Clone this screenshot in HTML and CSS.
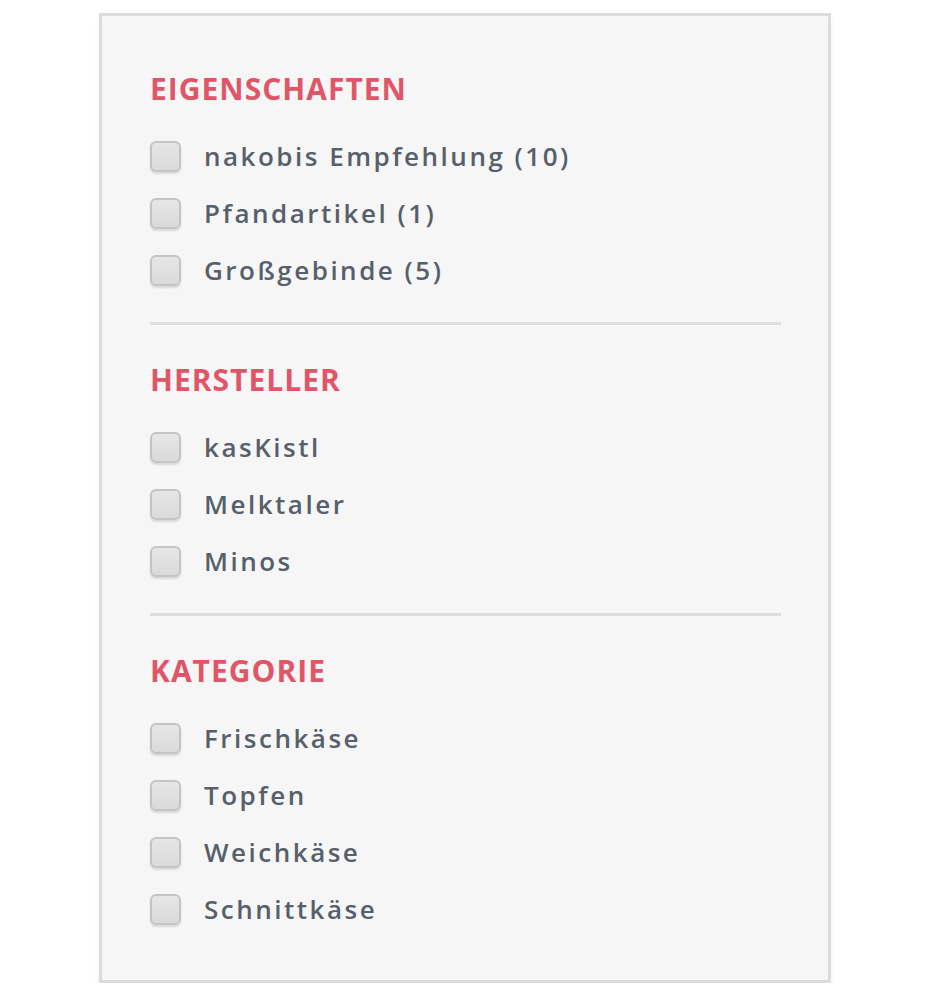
FILE: index.html
```html
<!DOCTYPE html>
<html lang="de">
<head>
<meta charset="utf-8">
<title>Filter</title>
<link rel="stylesheet" href="styles.css">
</head>
<body>
<div class="panel">
  <section class="group">
    <h3 class="group-title">EIGENSCHAFTEN</h3>
    <ul class="options">
      <li class="option"><span class="box"></span><span class="label">nakobis Empfehlung (10)</span></li>
      <li class="option"><span class="box"></span><span class="label">Pfandartikel (1)</span></li>
      <li class="option"><span class="box"></span><span class="label">Großgebinde (5)</span></li>
    </ul>
  </section>
  <section class="group">
    <h3 class="group-title">HERSTELLER</h3>
    <ul class="options">
      <li class="option"><span class="box"></span><span class="label">kasKistl</span></li>
      <li class="option"><span class="box"></span><span class="label">Melktaler</span></li>
      <li class="option"><span class="box"></span><span class="label">Minos</span></li>
    </ul>
  </section>
  <section class="group">
    <h3 class="group-title">KATEGORIE</h3>
    <ul class="options">
      <li class="option"><span class="box"></span><span class="label">Frischkäse</span></li>
      <li class="option"><span class="box"></span><span class="label">Topfen</span></li>
      <li class="option"><span class="box"></span><span class="label">Weichkäse</span></li>
      <li class="option"><span class="box"></span><span class="label">Schnittkäse</span></li>
    </ul>
  </section>
</div>
</body>
</html>
```

FILE: styles.css
```css
html, body {
  margin: 0;
  padding: 0;
  background: #ffffff;
}
body {
  font-family: "Open Sans", "Liberation Sans", sans-serif;
  padding: 13px 0 0 99px;
}
.panel {
  box-sizing: border-box;
  width: 732px;
  border: 3px solid #dcdcdc;
  background: #f6f6f6;
  padding: 55px 47px 42px 48px;
  box-shadow: 0 5px 6px rgba(0, 0, 0, 0.06);
}
.group {
  padding-bottom: 23px;
}
.group + .group {
  border-top: 3px solid #dedede;
  padding-top: 37px;
}
.group:last-child {
  padding-bottom: 0;
}
.group-title {
  margin: 0 0 21px 0;
  font-size: 30px;
  line-height: 36px;
  font-weight: 700;
  color: #e05668;
  letter-spacing: 1px;
}
.options {
  list-style: none;
  margin: 0;
  padding: 0;
}
.option {
  display: flex;
  align-items: center;
  height: 57px;
}
.box {
  box-sizing: border-box;
  width: 31px;
  height: 31px;
  border: 2px solid #c4c4c4;
  border-radius: 6px;
  background: linear-gradient(#e6e6e6, #dadada);
  box-shadow: 0 2px 2px rgba(0, 0, 0, 0.12);
  flex: none;
}
.label {
  margin-left: 23px;
  font-size: 26px;
  line-height: 57px;
  font-weight: 600;
  color: #56606b;
  letter-spacing: 2.5px;
}
```
